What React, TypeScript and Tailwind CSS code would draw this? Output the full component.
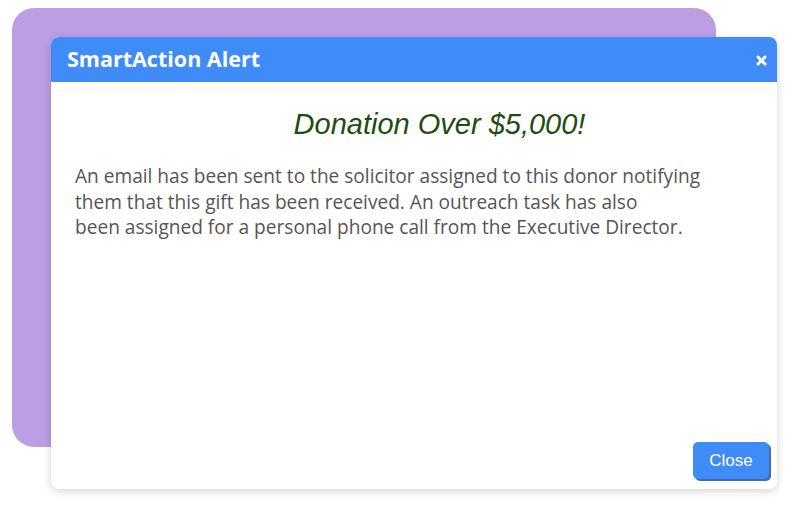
import React from "react";

const App: React.FC = () => {
  return (
    <div className="relative w-[800px] h-[507px] bg-white overflow-hidden">
      {/* purple backdrop card */}
      <div className="ml-[12px] mt-[8px] w-[704px] h-[439px] rounded-[22px] bg-[#bc9fe3]" />

      {/* alert dialog lies over the backdrop */}
      <div className="absolute left-[51px] top-[37px] w-[726px] h-[452px] flex flex-col bg-white rounded-[8px] shadow-[0_2px_8px_rgba(0,0,0,0.18)]">
        <div className="h-[45px] flex items-center justify-between pl-[16px] pr-[10px] bg-[#3f8cf9] rounded-t-[8px]">
          <span className="text-white font-bold text-[21.5px] font-['Open_Sans',sans-serif]">
            SmartAction Alert
          </span>
          <svg width="11" height="11" viewBox="0 0 11 11" className="mt-[1px]">
            <path d="M2 2 L9 9 M9 2 L2 9" stroke="white" strokeWidth="3" strokeLinecap="round" />
          </svg>
        </div>

        <div className="flex-1 px-[24px] pt-[25px]">
          <h1 className="pl-[51px] text-center italic text-[29px] leading-[34px] text-[#1e4d12] font-['Liberation_Sans',Arial,sans-serif]">
            Donation Over $5,000!
          </h1>
          <p className="mt-[23px] text-[19.1px] leading-[25.5px] text-[#555555] font-['Open_Sans',sans-serif]">
            An email has been sent to the solicitor assigned to this donor notifying
            <br />
            them that this gift has been received. An outreach task has also
            <br />
            been assigned for a personal phone call from the Executive Director.
          </p>
        </div>

        <div className="flex justify-end pr-[8px] pb-[10px]">
          <button className="w-[76px] h-[37px] rounded-[5px] bg-[#3f8cf9] text-white text-[17px] font-['Liberation_Sans',Arial,sans-serif] shadow-[2px_2px_0_#3a6cb8]">
            Close
          </button>
        </div>
      </div>
    </div>
  );
};

export default App;
